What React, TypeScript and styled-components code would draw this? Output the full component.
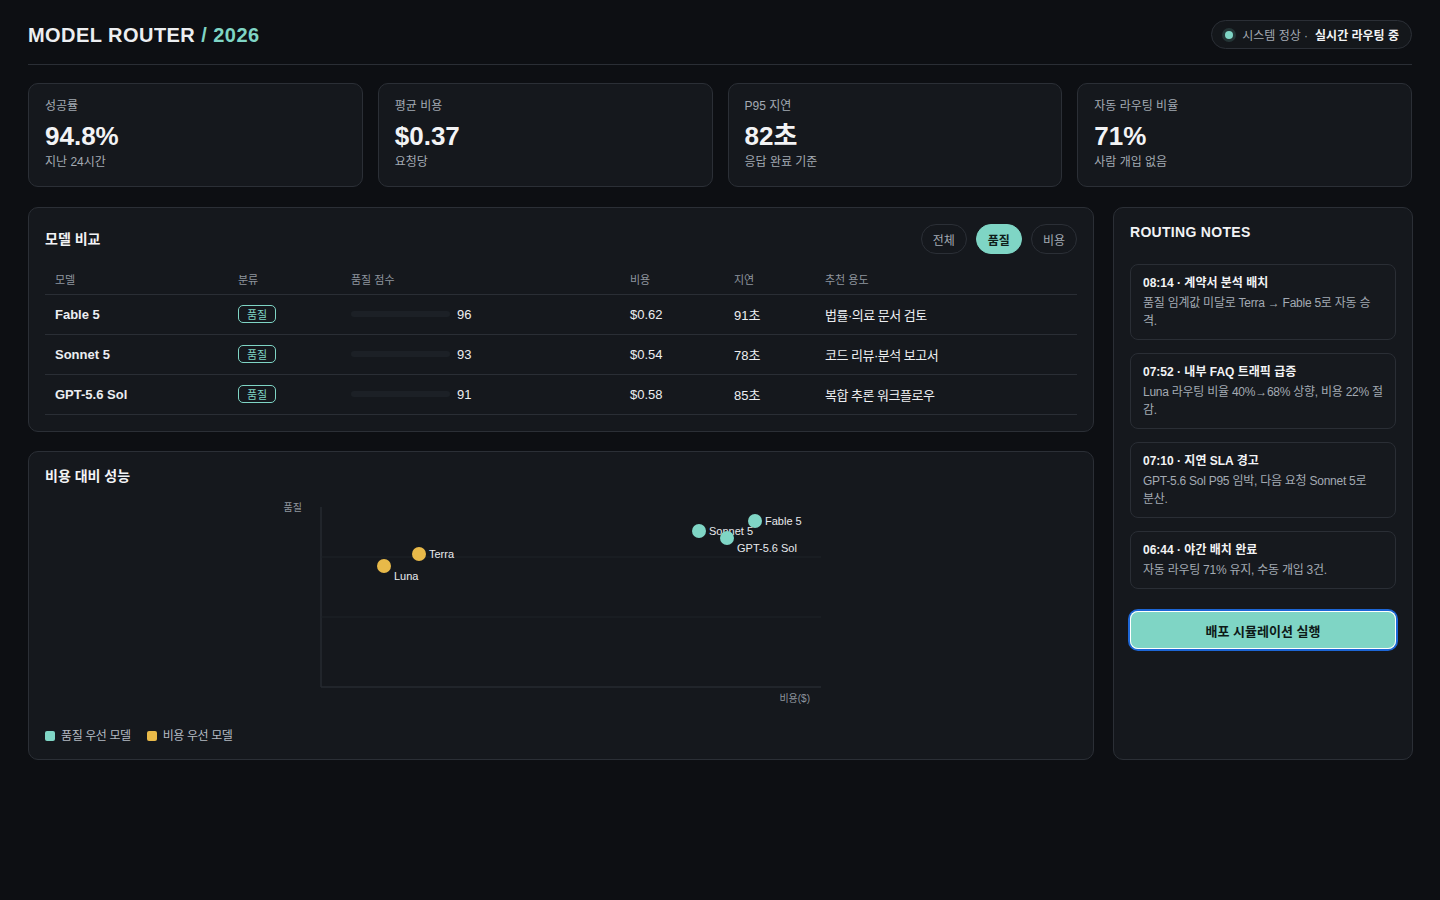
import React from 'react'
import styled, { createGlobalStyle } from 'styled-components'

const GlobalStyle = createGlobalStyle`
  * { box-sizing: border-box; }
  html, body { margin: 0; padding: 0; background: #0d0f13; }
  body {
    font-family: "Liberation Sans", "Noto Sans CJK KR", sans-serif;
    color: #eceef1;
  }
`

const TEAL = '#7fd5c5'
const YELLOW = '#e8b949'

type Model = {
  name: string
  score: number
  cost: string
  latency: string
  use: string
}

const models: Model[] = [
  { name: 'Fable 5', score: 96, cost: '$0.62', latency: '91초', use: '법률·의료 문서 검토' },
  { name: 'Sonnet 5', score: 93, cost: '$0.54', latency: '78초', use: '코드 리뷰·분석 보고서' },
  { name: 'GPT-5.6 Sol', score: 91, cost: '$0.58', latency: '85초', use: '복합 추론 워크플로우' },
]

const stats = [
  { label: '성공률', value: '94.8%', sub: '지난 24시간' },
  { label: '평균 비용', value: '$0.37', sub: '요청당' },
  { label: 'P95 지연', value: '82초', sub: '응답 완료 기준' },
  { label: '자동 라우팅 비율', value: '71%', sub: '사람 개입 없음' },
]

const notes = [
  { title: '08:14 · 계약서 분석 배치', body: '품질 임계값 미달로 Terra → Fable 5로 자동 승격.' },
  { title: '07:52 · 내부 FAQ 트래픽 급증', body: 'Luna 라우팅 비율 40%→68% 상향, 비용 22% 절감.' },
  // word joiner keeps "분산." together like the original wrap
  { title: '07:10 · 지연 SLA 경고', body: 'GPT-5.6 Sol P95 임박, 다음 요청 Sonnet 5로 분\u2060산.' },
  { title: '06:44 · 야간 배치 완료', body: '자동 라우팅 71% 유지, 수동 개입 3건.' },
]

// chart points in svg-local coords
const points = [
  { name: 'Fable 5', x: 710, y: 28, dy: 0, color: TEAL },
  { name: 'Sonnet 5', x: 654, y: 38, dy: 0, color: TEAL },
  { name: 'GPT-5.6 Sol', x: 682, y: 45, dy: 10, color: TEAL },
  { name: 'Terra', x: 374, y: 61, dy: 0, color: YELLOW },
  { name: 'Luna', x: 339, y: 73, dy: 10, color: YELLOW },
]

const App = () => {
  return (
    <>
      <GlobalStyle />
      <Page>
        <Header>
          <Title>
            MODEL ROUTER <Accent>/ 2026</Accent>
          </Title>
          <StatusPill>
            <Dot />
            <StatusText>시스템 정상 ·</StatusText>
            <StatusStrong>실시간 라우팅 중</StatusStrong>
          </StatusPill>
        </Header>

        <StatGrid>
          {stats.map((s) => (
            <StatCard key={s.label}>
              <StatLabel>{s.label}</StatLabel>
              <StatValue>{s.value}</StatValue>
              <StatSub>{s.sub}</StatSub>
            </StatCard>
          ))}
        </StatGrid>

        <MainGrid>
          <LeftCol>
            <Panel>
              <PanelHead>
                <PanelTitle>모델 비교</PanelTitle>
                <Filters>
                  <FilterPill>전체</FilterPill>
                  <FilterPill $active>품질</FilterPill>
                  <FilterPill>비용</FilterPill>
                </Filters>
              </PanelHead>
              <Table>
                <colgroup>
                  <col style={{ width: 183 }} />
                  <col style={{ width: 113 }} />
                  <col style={{ width: 279 }} />
                  <col style={{ width: 104 }} />
                  <col style={{ width: 91 }} />
                  <col style={{ width: 262 }} />
                </colgroup>
                <thead>
                  <tr>
                    <Th>모델</Th>
                    <Th>분류</Th>
                    <Th>품질 점수</Th>
                    <Th>비용</Th>
                    <Th>지연</Th>
                    <Th>추천 용도</Th>
                  </tr>
                </thead>
                <tbody>
                  {models.map((m) => (
                    <tr key={m.name}>
                      <Td $bold>{m.name}</Td>
                      <Td>
                        <Badge>품질</Badge>
                      </Td>
                      <Td>
                        <ScoreCell>
                          <BarTrack />
                          <span>{m.score}</span>
                        </ScoreCell>
                      </Td>
                      <Td>{m.cost}</Td>
                      <Td>{m.latency}</Td>
                      <Td $korean>{m.use}</Td>
                    </tr>
                  ))}
                </tbody>
              </Table>
            </Panel>

            <Panel>
              <PanelTitle>비용 대비 성능</PanelTitle>
              <ChartSvg width="1032" height="219" viewBox="0 0 1032 219">
                <line x1="276" y1="14" x2="276" y2="194" stroke="#262a31" strokeWidth="1.5" />
                <line x1="276" y1="194" x2="776" y2="194" stroke="#262a31" strokeWidth="1.5" />
                <line x1="276" y1="64" x2="776" y2="64" stroke="#1e2228" strokeWidth="1" />
                <line x1="276" y1="124" x2="776" y2="124" stroke="#1e2228" strokeWidth="1" />
                <AxisText x="257" y="18" textAnchor="end">품질</AxisText>
                <AxisText x="765" y="209" textAnchor="end">비용($)</AxisText>
                {points.map((p) => (
                  <g key={p.name}>
                    <circle cx={p.x} cy={p.y} r="7" fill={p.color} />
                    <PointText x={p.x + 10} y={p.y + p.dy + 4}>
                      {p.name}
                    </PointText>
                  </g>
                ))}
              </ChartSvg>
              <Legend>
                <LegendItem>
                  <Swatch $color={TEAL} />
                  품질 우선 모델
                </LegendItem>
                <LegendItem>
                  <Swatch $color={YELLOW} />
                  비용 우선 모델
                </LegendItem>
              </Legend>
            </Panel>
          </LeftCol>

          <SidePanel>
            <SideTitle>ROUTING NOTES</SideTitle>
            <NoteList>
              {notes.map((n) => (
                <NoteCard key={n.title}>
                  <NoteTitle>{n.title}</NoteTitle>
                  <NoteBody>{n.body}</NoteBody>
                </NoteCard>
              ))}
            </NoteList>
            <RunButton>배포 시뮬레이션 실행</RunButton>
          </SidePanel>
        </MainGrid>
      </Page>
    </>
  )
}
export default App

const Page = styled.div`
  width: 1440px;
  min-height: 900px;
  padding: 21px 28px 28px;
`

const Header = styled.header`
  display: flex;
  align-items: center;
  justify-content: space-between;
  height: 44px;
  padding-bottom: 15px;
  border-bottom: 1px solid #2a2e35;
  margin-bottom: 18px;
`

const Title = styled.h1`
  margin: 0;
  font-size: 20px;
  font-weight: 700;
  letter-spacing: 0.45px;
  color: #eceef1;
`

const Accent = styled.span`
  color: ${TEAL};
`

const StatusPill = styled.div`
  display: flex;
  align-items: center;
  height: 29px;
  margin-top: -1px;
  padding: 0 12px 0 13px;
  border: 1px solid #2b2f36;
  border-radius: 15px;
  background: #14171b;
  font-size: 12px;
`

const Dot = styled.span`
  width: 8px;
  height: 8px;
  border-radius: 50%;
  background: ${TEAL};
  box-shadow: 0 0 0 3px rgba(127, 213, 197, 0.16);
  margin-right: 9px;
`

const StatusText = styled.span`
  color: #a3aab3;
  margin-right: 7px;
`

const StatusStrong = styled.span`
  color: #f2f3f5;
  font-weight: 700;
`

const StatGrid = styled.div`
  display: grid;
  grid-template-columns: repeat(4, 1fr);
  gap: 15px;
  margin-bottom: 20px;
`

const StatCard = styled.div`
  height: 104px;
  padding: 14px 16px;
  background: #15181d;
  border: 1px solid #2b2f36;
  border-radius: 10px;
`

const StatLabel = styled.div`
  font-size: 12px;
  line-height: 16px;
  color: #a3aab3;
`

const StatValue = styled.div`
  margin-top: 6px;
  font-size: 26px;
  line-height: 32px;
  font-weight: 700;
  color: #f2f3f5;
`

const StatSub = styled.div`
  margin-top: 2px;
  font-size: 12px;
  line-height: 16px;
  color: #a3aab3;
`

const MainGrid = styled.div`
  display: grid;
  grid-template-columns: 1fr 300px;
  gap: 19px;
  align-items: stretch;
`

const LeftCol = styled.div`
  display: flex;
  flex-direction: column;
  gap: 19px;
`

const Panel = styled.section`
  padding: 16px;
  background: #15181d;
  border: 1px solid #2b2f36;
  border-radius: 10px;
`

const PanelHead = styled.div`
  display: flex;
  align-items: center;
  justify-content: space-between;
  height: 30px;
  margin-bottom: 10px;
`

const PanelTitle = styled.h2`
  margin: 0;
  font-size: 14px;
  line-height: 16px;
  font-weight: 700;
  color: #f2f3f5;
`

const Filters = styled.div`
  display: flex;
  gap: 9px;
`

const FilterPill = styled.button<{ $active?: boolean }>`
  height: 30px;
  padding: 0 11px;
  border-radius: 15px;
  font-family: inherit;
  font-size: 12px;
  font-weight: ${(p) => (p.$active ? 700 : 400)};
  color: ${(p) => (p.$active ? '#0e1d1a' : '#a3aab3')};
  background: ${(p) => (p.$active ? TEAL : 'transparent')};
  border: 1px solid ${(p) => (p.$active ? TEAL : '#2b2f36')};
  cursor: pointer;
`

const Table = styled.table`
  width: 100%;
  table-layout: fixed;
  border-collapse: collapse;
`

const Th = styled.th`
  height: 30px;
  padding: 0 10px;
  text-align: left;
  font-size: 11px;
  font-weight: 400;
  color: #8e959e;
  border-bottom: 1px solid #2a2e35;
`

const Td = styled.td<{ $bold?: boolean; $korean?: boolean }>`
  height: 40px;
  padding: 0 10px;
  font-size: 13px;
  font-weight: ${(p) => (p.$bold ? 700 : 400)};
  letter-spacing: ${(p) => (p.$korean ? '-0.5px' : '0')};
  color: #eceef1;
  border-bottom: 1px solid #2a2e35;
  white-space: nowrap;
`

const Badge = styled.span`
  display: inline-flex;
  align-items: center;
  height: 18px;
  padding: 0 8px;
  border: 1px solid ${TEAL};
  border-radius: 5px;
  font-size: 11px;
  color: ${TEAL};
`

const ScoreCell = styled.div`
  display: flex;
  align-items: center;
  gap: 7px;
`

const BarTrack = styled.div`
  width: 99px;
  height: 6px;
  border-radius: 3px;
  background: #1c2026;
`

const ChartSvg = styled.svg`
  display: block;
  margin-top: 9px;
`

const AxisText = styled.text`
  font-size: 10px;
  fill: #8e959e;
  font-family: "Liberation Sans", "Noto Sans CJK KR", sans-serif;
`

const PointText = styled.text`
  font-size: 11px;
  fill: #e8eaed;
  font-family: "Liberation Sans", "Noto Sans CJK KR", sans-serif;
`

const Legend = styled.div`
  display: flex;
  gap: 16px;
  margin-top: 17px;
  font-size: 12px;
  line-height: 14px;
  letter-spacing: -0.4px;
  color: #b3bac2;
`

const LegendItem = styled.div`
  display: flex;
  align-items: center;
  gap: 6px;
`

const Swatch = styled.span<{ $color: string }>`
  width: 10px;
  height: 10px;
  border-radius: 2px;
  background: ${(p) => p.$color};
`

const SidePanel = styled.aside`
  display: flex;
  flex-direction: column;
  padding: 16px;
  background: #15181d;
  border: 1px solid #2b2f36;
  border-radius: 10px;
`

const SideTitle = styled.h2`
  margin: 0 0 24px;
  font-size: 14px;
  line-height: 16px;
  font-weight: 700;
  letter-spacing: 0.3px;
  color: #f2f3f5;
`

const NoteList = styled.div`
  display: flex;
  flex-direction: column;
  gap: 13px;
`

const NoteCard = styled.div`
  padding: 10px 12px 9px;
  background: #16191e;
  border: 1px solid #2a2e35;
  border-radius: 8px;
`

const NoteTitle = styled.div`
  font-size: 12px;
  line-height: 16px;
  font-weight: 700;
  color: #f2f3f5;
`

const NoteBody = styled.div`
  margin-top: 3px;
  font-size: 12px;
  line-height: 18px;
  letter-spacing: -0.25px;
  color: #a3aab3;
`

const RunButton = styled.button`
  margin-top: 22px;
  height: 38px;
  width: 100%;
  border: none;
  border-radius: 8px;
  background: ${TEAL};
  color: #0e1a18;
  font-family: inherit;
  font-size: 13px;
  font-weight: 700;
  box-shadow: inset 0 0 0 1px #ffffff, 0 0 0 2px #1d66d6;
  cursor: pointer;
`
